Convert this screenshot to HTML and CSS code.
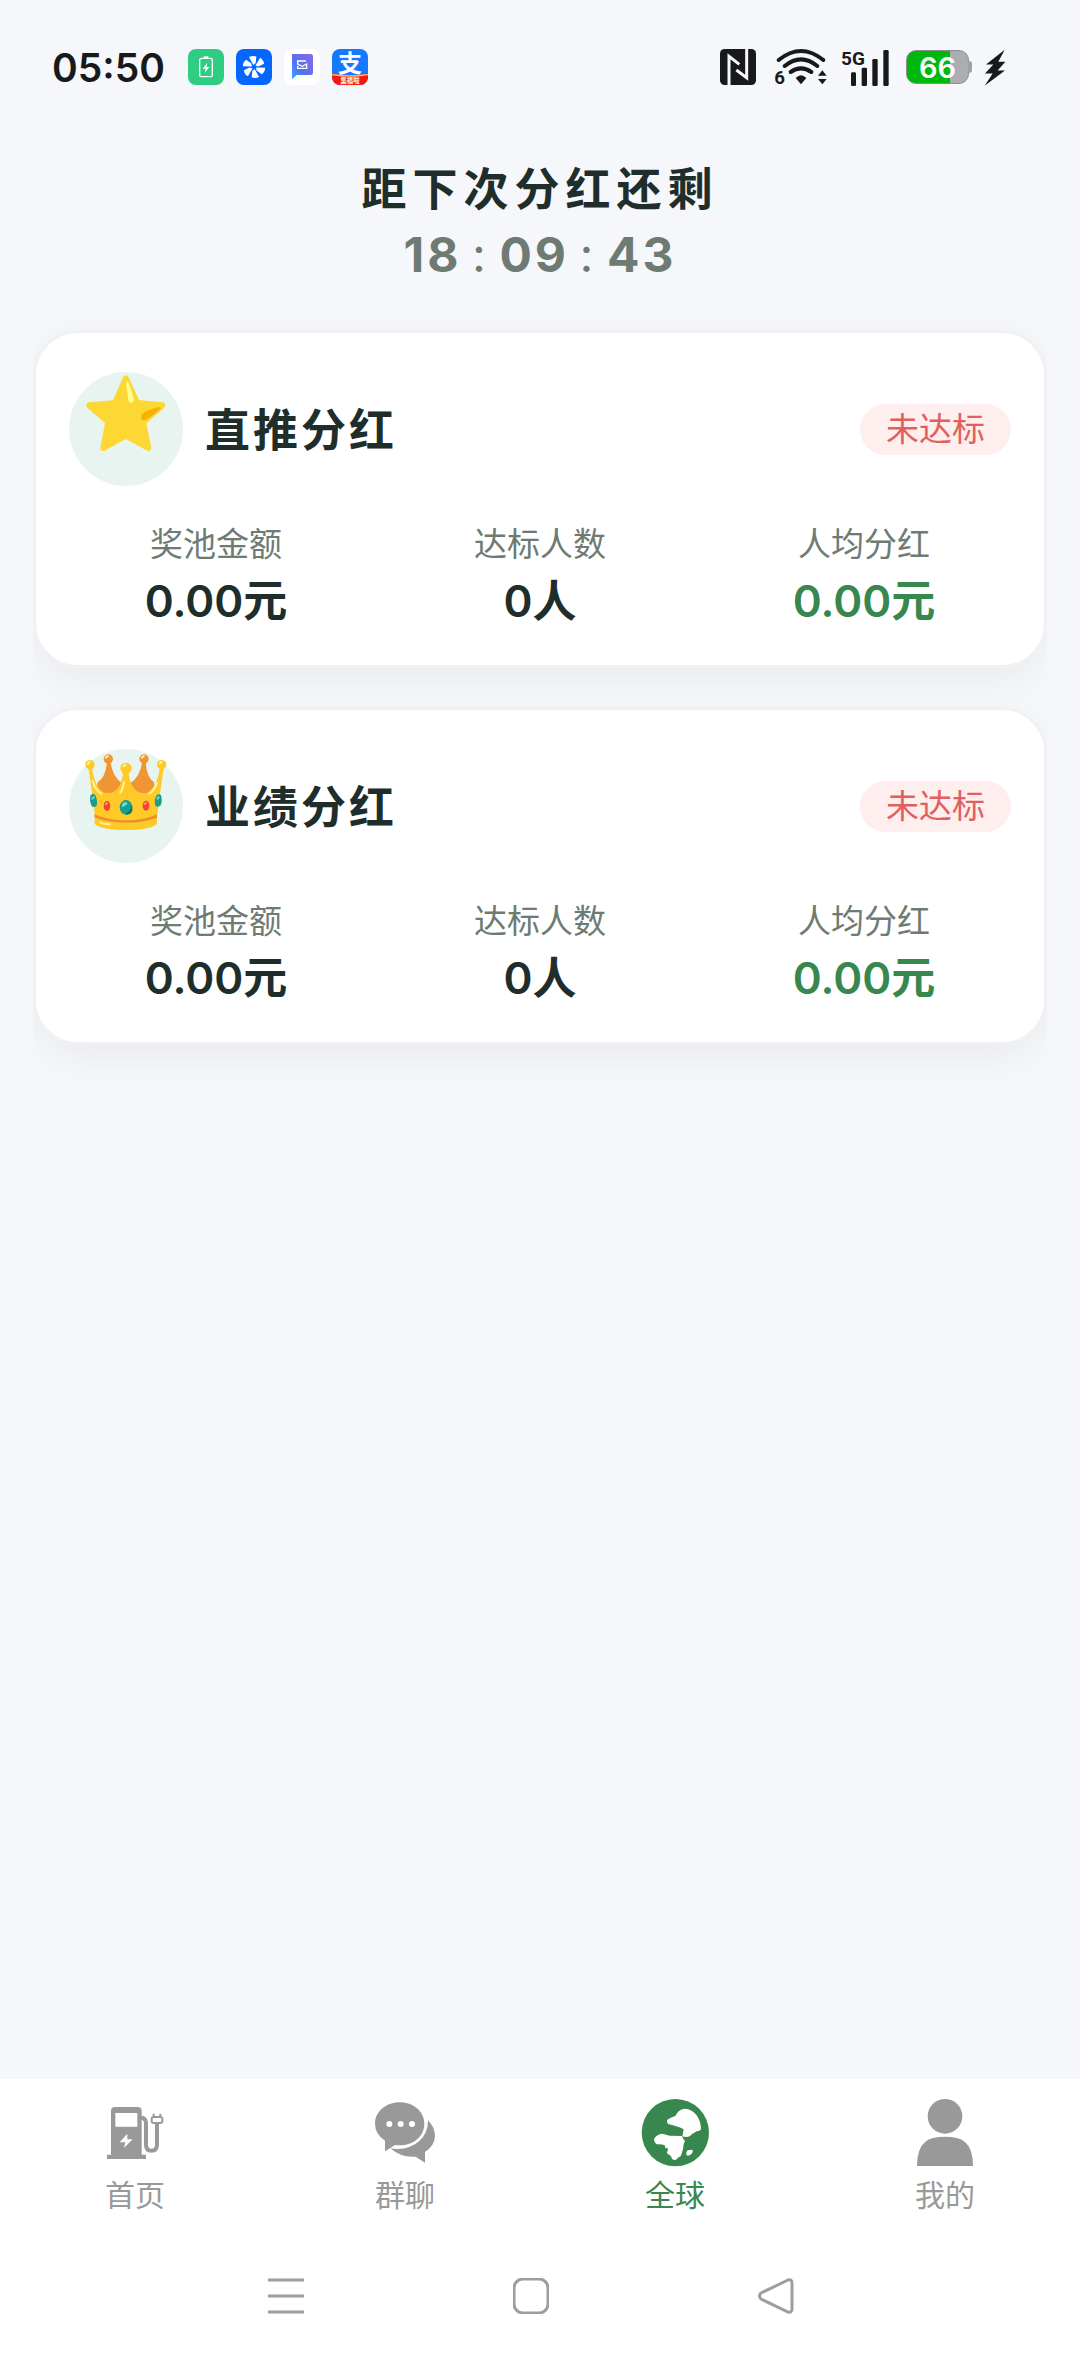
FILE: index.html
```html
<!DOCTYPE html>
<html lang="zh-CN">
<head>
  <meta charset="UTF-8">
  <title>全球分红</title>
  <meta name="viewport" content="width=device-width, initial-scale=1.0">
  <link rel="stylesheet" href="styles.css">
</head>
<body>

  <!-- 状态栏 -->
  <header class="status-bar">
    <span class="clock">05:50</span>
    <div class="status-apps">
      <svg viewBox="0 0 108 108" width="36" height="36">
        <rect width="108" height="108" rx="24" fill="#2fcd81"/>
        <rect x="35" y="28" width="38" height="55" rx="6" fill="none" stroke="#fff" stroke-width="4"/>
        <path d="M47 22h14v6h-14z" fill="#fff"/>
        <path d="M58 41L44 59h9l-3 13 14-18h-9z" fill="#fff"/>
      </svg>
      <svg viewBox="0 0 108 108" width="36" height="36">
        <rect width="108" height="108" rx="24" fill="#0366fe"/>
        <g fill="#fff">
          <path d="M52 48L39 24Q50 18 61 23L59 42Z"/>
          <path d="M52 48L39 24Q50 18 61 23L59 42Z" transform="rotate(60 54 54)"/>
          <path d="M52 48L39 24Q50 18 61 23L59 42Z" transform="rotate(120 54 54)"/>
          <path d="M52 48L39 24Q50 18 61 23L59 42Z" transform="rotate(180 54 54)"/>
          <path d="M52 48L39 24Q50 18 61 23L59 42Z" transform="rotate(240 54 54)"/>
          <path d="M52 48L39 24Q50 18 61 23L59 42Z" transform="rotate(300 54 54)"/>
        </g>
      </svg>
      <svg viewBox="0 0 108 108" width="36" height="36">
        <defs>
          <linearGradient id="msg" x1="1" y1="0" x2="0" y2="1">
            <stop offset="0" stop-color="#8a6be8"/>
            <stop offset=".6" stop-color="#5470f0"/>
            <stop offset="1" stop-color="#35a8ff"/>
          </linearGradient>
        </defs>
        <rect width="108" height="108" rx="24" fill="#fff"/>
        <path d="M24 15h56q7 0 7 7v49q0 7-7 7H38L24 91z" fill="url(#msg)"/>
        <path d="M66 36H41v9l14 7 13-7v13H41v-8" fill="none" stroke="#fff" stroke-width="4"/>
      </svg>
      <svg viewBox="0 0 108 108" width="36" height="36">
        <defs>
          <clipPath id="pay"><rect width="108" height="108" rx="24"/></clipPath>
        </defs>
        <g clip-path="url(#pay)">
          <rect width="108" height="108" fill="#1677ff"/>
          <path d="M0 75Q54 82 108 75v33H0z" fill="#f5190d"/>
          <path d="M0 75Q54 82 108 75v4Q54 88 0 79z" fill="#ffb45c"/>
          <text x="54" y="68" class="pay-glyph">支</text>
          <text x="54" y="101" class="pay-tag">集福啦</text>
        </g>
      </svg>
    </div>
    <div class="status-icons">
      <!-- NFC -->
      <svg viewBox="0 0 108 108" width="36" height="36">
        <rect width="108" height="108" rx="14" fill="#18191b"/>
        <path d="M27 108V22l31 24M80 0v86L49 63" fill="none" stroke="#f5f7fb" stroke-width="9"/>
      </svg>
      <!-- WiFi -->
      <svg class="wifi" viewBox="222 54 162 114" width="54" height="38">
        <g fill="none" stroke="#18191b" stroke-width="12" stroke-linecap="round">
          <path d="M236 90Q303 36 370 90"/>
          <path d="M254 108Q303 68 352 108"/>
          <path d="M272 126Q303 104 334 126"/>
        </g>
        <path d="M287 144Q303 128 319 144L303 163Z" fill="#18191b"/>
        <path d="M354 137h26l-13-16zM354 147h26l-13 16z" fill="#18191b"/>
        <text x="223" y="163" class="wifi-six">6</text>
      </svg>
      <!-- 5G 信号 -->
      <svg class="signal" viewBox="423 54 144 111" width="48" height="37">
        <text x="423" y="101" class="net-type">5G</text>
        <g fill="#18191b">
          <rect x="453" y="124" width="15" height="41" rx="4"/>
          <rect x="485" y="110" width="16" height="55" rx="4"/>
          <rect x="517" y="84" width="16" height="81" rx="4"/>
          <rect x="550" y="57" width="16" height="108" rx="4"/>
        </g>
      </svg>
      <div class="battery"><span>66</span></div>
      <svg viewBox="850 58 66 110" width="22" height="37">
        <path d="M912 60L856 104H878L853 131H876L852 168L913 122H891L914 96H893Z" fill="#18191b"/>
      </svg>
    </div>
  </header>

  <main class="content">
    <section class="countdown">
      <h1>距下次分红还剩</h1>
      <div class="timer">
        <b>18</b><i>:</i><b>09</b><i>:</i><b>43</b>
      </div>
    </section>

    <section class="cards">
      <article class="card">
        <div class="card-head">
          <div class="card-icon">
            <svg viewBox="147 155 342 342" width="114" height="114">
              <path d="M310 169Q317 161 325 169L357 239L430 246Q439 251 434 261L379 309L394 382Q393 394 382 391L317 356L253 392Q241 393 241 382L255 308L200 261Q196 250 206 246L279 240Z" fill="#fdd835"/>
              <path d="M318 187Q321 180 326 187L342 237Q341 248 332 248Q326 247 325 239Z" fill="#ffff8d"/>
              <path d="M364 284Q380 267 416 261Q424 260 421 266Q401 286 376 300Q366 302 363 293Z" fill="#f4b400"/>
            </svg>
          </div>
          <h2>直推分红</h2>
          <span class="badge">未达标</span>
        </div>
        <dl class="stats">
          <div><dt>奖池金额</dt><dd>0.00元</dd></div>
          <div><dt>达标人数</dt><dd>0人</dd></div>
          <div><dt>人均分红</dt><dd class="green">0.00元</dd></div>
        </dl>
      </article>

      <article class="card">
        <div class="card-head">
          <div class="card-icon">
            <svg viewBox="147 177 342 342" width="114" height="114">
              <g fill="#f19534">
                <path d="M261 214L271 214Q278 262 306 279L298 315H230L233 277Q258 261 261 214Z"/>
                <path d="M377 214L367 214Q360 262 331 279L340 315H405L402 277Q379 261 377 214Z"/>
                <circle cx="265" cy="207" r="14"/>
                <circle cx="372" cy="207" r="14"/>
              </g>
              <path d="M206 235L216 233Q222 288 252 308Q301 318 310 246H325Q334 318 382 308Q413 288 420 233L431 235L411 376V402Q388 420 318 420Q247 420 224 402V370Z" fill="#ffca28"/>
              <g fill="#ffca28">
                <circle cx="210" cy="224" r="14"/>
                <circle cx="318" cy="235" r="17"/>
                <circle cx="425" cy="224" r="14"/>
              </g>
              <path d="M223 373Q265 391 318 391Q374 391 411 373V383Q368 398 318 398Q260 398 224 382Z" fill="#eb8f2e"/>
              <g fill="none" stroke="#fff59d" stroke-width="6" stroke-linecap="round">
                <path d="M218 272Q225 300 244 311"/>
                <path d="M312 277Q308 298 301 308"/>
                <path d="M411 279Q402 303 388 311"/>
                <path d="M240 398Q254 403 269 403"/>
                <path d="M204 222L208 216M258 203L263 198M311 229L316 224M366 203L371 198M420 220L424 216"/>
              </g>
              <g fill="#1a9b8c">
                <ellipse cx="318" cy="352" rx="19" ry="22"/>
                <path d="M212 316Q207 333 215 348Q222 354 230 347Q234 330 225 314Q217 309 212 316Z"/>
                <path d="M423 316Q428 333 422 346Q414 354 406 347Q401 330 410 316Q418 309 423 316Z"/>
              </g>
              <path d="M306 352Q304 338 315 336Q329 338 318 346Z" fill="#6fddc8"/>
              <path d="M215 328L223 320M411 328L417 320" stroke="#6fddc8" stroke-width="6"/>
              <path d="M318 370Q334 363 335 345Q344 373 318 374Z" fill="#00796b"/>
              <ellipse cx="261" cy="348" rx="10" ry="15" fill="#f44336"/>
              <ellipse cx="378" cy="347" rx="10" ry="15" fill="#f44336"/>
              <path d="M256 345L262 338M373 344L379 337" stroke="#ff9a8d" stroke-width="5"/>
            </svg>
          </div>
          <h2>业绩分红</h2>
          <span class="badge">未达标</span>
        </div>
        <dl class="stats">
          <div><dt>奖池金额</dt><dd>0.00元</dd></div>
          <div><dt>达标人数</dt><dd>0人</dd></div>
          <div><dt>人均分红</dt><dd class="green">0.00元</dd></div>
        </dl>
      </article>
    </section>
  </main>

  <!-- 底部导航 -->
  <nav class="tab-bar">
    <a href="#home">
      <svg viewBox="123 87 204 204" width="68" height="68">
        <path d="M153 254V122Q153 111 165 111H233Q245 111 245 122V254H258V267H141V254ZM166 129V170H232V129ZM202 191L179 217H196L192 234L218 208H202Z" fill="currentColor" fill-rule="evenodd"/>
        <path d="M243 143Q258 143 258 160V225Q258 242 274 242Q291 242 291 225V160" fill="none" stroke="currentColor" stroke-width="12"/>
        <rect x="275" y="141" width="32" height="18" rx="6" fill="none" stroke="currentColor" stroke-width="6"/>
        <path d="M281 131v8M301 131v8" stroke="currentColor" stroke-width="6"/>
      </svg>
      <span>首页</span>
    </a>
    <a href="#chat">
      <svg viewBox="933 87 204 204" width="68" height="68">
        <path d="M1019 97C1062 97 1093 126 1093 161C1093 199 1060 226 1018 226Q1011 226 1005 225L975 244V212Q945 192 945 161C945 126 977 97 1019 97Z" fill="currentColor"/>
        <path d="M1104 151Q1125 173 1125 199Q1124 227 1095 246V278L1067 260Q1024 264 991 235Q1045 243 1078 213Q1104 191 1104 151Z" fill="currentColor"/>
        <g fill="#fff">
          <circle cx="988" cy="162" r="9"/>
          <circle cx="1022" cy="162" r="9"/>
          <circle cx="1056" cy="162" r="9"/>
        </g>
      </svg>
      <span>群聊</span>
    </a>
    <a href="#global" class="active">
      <svg viewBox="123 87 204 204" width="68" height="68">
        <circle cx="226" cy="188" r="101" fill="currentColor"/>
        <g fill="#fff">
          <path d="M201 151Q203 146 226 138Q234 119 254 116Q275 117 290 136Q302 153 303 177Q302 182 290 184Q277 191 269 199Q258 203 247 199Q250 187 251 178Q235 169 204 162Q200 158 201 151Z"/>
          <path d="M162 207Q169 193 187 191L209 197L246 198L250 207L255 213Q249 222 249 236Q244 260 238 261Q232 263 231 267Q223 273 216 266Q213 256 201 250V246L204 241L202 233L195 235L196 227Q187 222 169 223Q162 217 162 207Z"/>
          <path d="M263 241L278 239Q279 246 275 251Q266 260 259 255Q256 247 263 241Z"/>
        </g>
      </svg>
      <span>全球</span>
    </a>
    <a href="#mine">
      <svg viewBox="933 87 204 204" width="68" height="68">
        <circle cx="1035" cy="139" r="52" fill="currentColor"/>
        <path d="M951 288Q951 235 976 215Q993 200 1035 200Q1077 200 1094 215Q1119 235 1119 288Z" fill="currentColor"/>
      </svg>
      <span>我的</span>
    </a>
  </nav>

  <!-- 系统按键 -->
  <div class="system-bar">
    <button type="button" aria-label="最近任务">
      <svg viewBox="0 0 36 36" width="36" height="36"><path d="M0 2h36M0 18h36M0 34h36"/></svg>
    </button>
    <button type="button" aria-label="主屏幕">
      <svg viewBox="0 0 36 36" width="36" height="36"><rect x="1" y="1" width="34" height="34" rx="9"/></svg>
    </button>
    <button type="button" aria-label="返回">
      <svg viewBox="0 0 36 36" width="36" height="36"><path d="M30 2L3 15Q0 18 3 21L30 34Q34 35 34 31V5Q34 1 30 2Z"/></svg>
    </button>
  </div>

</body>
</html>
```

FILE: styles.css
```css
* {
  box-sizing: border-box;
}
body {
  margin: 0;
  min-height: 100vh;
  display: flex;
  flex-direction: column;
  background-color: #f5f7fb;
  font-family: Inter, 'Noto Sans CJK SC', sans-serif;
  color: #202e2b;
}
svg {
  display: block;
  flex: none;
}
h1, h2, dl, dd {
  margin: 0;
}

/* status bar */
.status-bar {
  display: flex;
  align-items: center;
  height: 134px;
  padding: 0 74px 0 52px;
  color: #18191b;
}
.clock {
  width: 136px;
  font-size: 39px;
  font-weight: 600;
}
.status-apps {
  display: flex;
  gap: 12px;
}
.pay-glyph {
  font-size: 72px;
  font-weight: 700;
  fill: #fff;
  text-anchor: middle;
}
.pay-tag {
  font-size: 19px;
  font-weight: 700;
  fill: #fff;
  text-anchor: middle;
}
.status-icons {
  display: flex;
  align-items: center;
  gap: 12px;
  margin-left: auto;
}
.wifi {
  margin: 0 1px 0 6px;
}
.wifi, .signal {
  overflow: visible;
}
.wifi-six {
  font-family: Roboto, sans-serif;
  font-size: 56px;
  font-weight: 700;
  fill: #18191b;
}
.net-type {
  font-family: Roboto, sans-serif;
  font-size: 57px;
  font-weight: 700;
  fill: #18191b;
}
.battery {
  position: relative;
  width: 63px;
  height: 34px;
  margin: 0 3px 0 5px;
  border: 1px solid #8c8e93;
  border-radius: 10px;
  background: linear-gradient(to right, #00b80c 70%, #acadb2 70%);
  color: #fff;
  font-size: 29px;
  font-weight: 600;
  line-height: 33px;
  text-align: center;
}
.battery::after {
  content: "";
  position: absolute;
  right: -4px;
  top: 10px;
  width: 4px;
  height: 12px;
  border-radius: 0 3px 3px 0;
  background: #a0a1a6;
}

/* countdown */
.content {
  flex: 1;
}
.countdown {
  padding-top: 24px;
  text-align: center;
}
.countdown h1 {
  font-size: 45px;
  line-height: 64px;
  font-weight: 700;
  letter-spacing: 6px;
}
.timer {
  display: flex;
  justify-content: center;
  font-size: 48px;
  line-height: 66px;
  color: #6e7b73;
  letter-spacing: 3px;
}
.timer i {
  width: 38px;
  font-style: normal;
}

/* cards */
.cards {
  display: flex;
  flex-direction: column;
  gap: 39px;
  margin: 22px 33px 0;
  padding: 20px 0 60px;
  overflow: hidden;
}
.card {
  padding: 39px 0 33px;
  background: #fff;
  border: 3px solid #f0f2f2;
  border-radius: 45px;
  box-shadow: 0 12px 36px rgba(0, 0, 0, 0.05);
}
.card-head {
  display: flex;
  align-items: center;
  padding: 0 33px;
}
.card-icon {
  border-radius: 50%;
  background: #e8f4ef;
}
.card h2 {
  margin-left: 22px;
  padding-top: 4px;
  font-size: 45px;
  line-height: 66px;
  font-weight: 600;
  letter-spacing: 3px;
}
.badge {
  margin-left: auto;
  padding: 0 26px;
  border-radius: 26px;
  background: #feeeee;
  color: #e25f5f;
  font-size: 33px;
  line-height: 51px;
  font-weight: 400;
}
.stats {
  display: grid;
  grid-template-columns: repeat(3, 1fr);
  margin-top: 34px;
  padding: 0 18px;
  text-align: center;
}
.stats dt {
  font-size: 33px;
  line-height: 48px;
  font-weight: 400;
  color: #6e7b73;
}
.stats dd {
  padding-top: 2px;
  font-size: 44px;
  line-height: 62px;
  font-weight: 600;
}
.stats .green {
  color: #38874f;
}

/* bottom tabs */
.tab-bar {
  display: flex;
  height: 157px;
  padding-top: 20px;
  background: #fff;
}
.tab-bar a {
  flex: 1;
  display: flex;
  flex-direction: column;
  align-items: center;
  gap: 6px;
  color: #999;
  font-size: 30px;
  line-height: 44px;
  font-weight: 400;
  text-decoration: none;
}
.tab-bar .active {
  color: #38874f;
}

/* system keys */
.system-bar {
  display: flex;
  justify-content: center;
  gap: 209px;
  padding: 42px 18px 48px 0;
  background: #fff;
}
.system-bar button {
  padding: 0;
  border: none;
  background: none;
  cursor: pointer;
}
.system-bar svg {
  fill: none;
  stroke: #9e9e9e;
  stroke-width: 3;
}
```
